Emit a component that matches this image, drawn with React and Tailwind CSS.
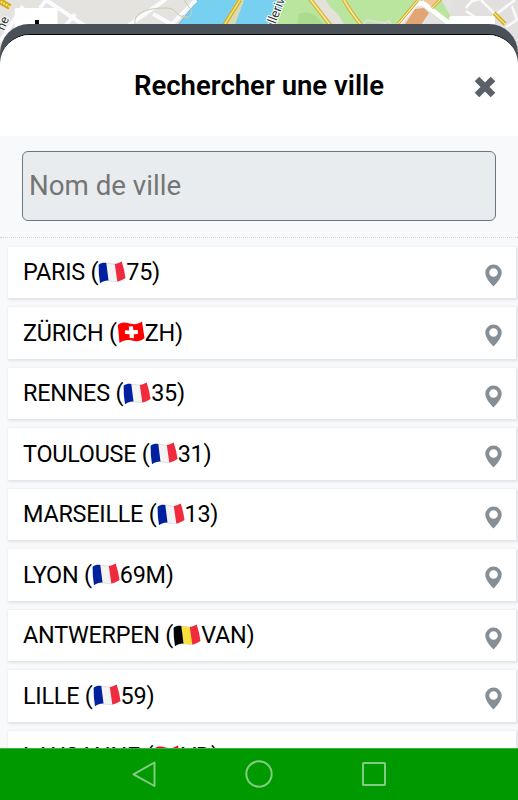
const CITIES = [
  { name: 'PARIS', country: 'fr', code: '75' },
  { name: 'ZÜRICH', country: 'ch', code: 'ZH' },
  { name: 'RENNES', country: 'fr', code: '35' },
  { name: 'TOULOUSE', country: 'fr', code: '31' },
  { name: 'MARSEILLE', country: 'fr', code: '13' },
  { name: 'LYON', country: 'fr', code: '69M' },
  { name: 'ANTWERPEN', country: 'be', code: 'VAN' },
  { name: 'LILLE', country: 'fr', code: '59' },
  { name: 'LAUSANNE', country: 'ch', code: 'VD' },
]

const BANDS = {
  fr: ['#00209f', '#f4f4f4', '#ef2b3d'],
  be: ['#050505', '#fbdf3c', '#ef2b3d'],
}

function Flag({ country }) {
  if (country === 'ch') {
    return (
      <svg className="inline-block h-[23px] w-[28px] shrink-0" viewBox="0 0 28 23">
        <path d="M.8 4C6-.5 10 2 14 2.800 18 3.700 21 3 25 .6L27.500 17C23 21 19 20.500 15 19.500 10 18.500 7 19 2.500 22Z" fill="#f00" />
        <path d="M11.800 5.500l4.200-.2.300 3.700 4.400.1.300 4-4.300.1.200 4-4.200-.1-.200-3.900-4.500-.1-.100-3.800 4.200.1z" fill="#fff" />
      </svg>
    )
  }
  const [left, middle, right] = BANDS[country]
  return (
    <svg className="inline-block h-[23px] w-[28px] shrink-0" viewBox="0 0 28 23">
      <path d="M8 2.200C12 1.500 15 4 20 2.600L22 19.500C17 22 13 19 9 20Z" fill={middle} />
      <path d="M8.500 2.300C12 2 15 4 20 2.800M10 20C14 19.500 17 22 22 19.500" fill="none" stroke="#c9cccf" strokeWidth=".6" />
      <path d="M.6 3.800C3 2 5.500 1.500 8.300 2L10.500 19.600C7 19.500 5 20.500 2 22.300Q.4 13 .6 3.800Z" fill={left} />
      <path d="M16.800 3.100C19.500 2.800 21.500 1.500 23.700.5Q26.500 9 27.500 17C24.500 18.500 22.500 20.300 19.300 20.600Z" fill={right} />
    </svg>
  )
}

function Pin() {
  return (
    <svg className="h-[23px] w-[17px]" viewBox="0 0 17 23">
      <path fillRule="evenodd" d="M8.500.5A8.200 8.200 0 0 0 .3 8.700C.3 12.500 4 18 8.500 22.500 13 18 16.700 12.500 16.700 8.700A8.200 8.200 0 0 0 8.500.5ZM8.500 4.200a4.300 4.300 0 1 1 0 8.600 4.300 4.300 0 0 1 0-8.600Z" fill="#868e96" />
    </svg>
  )
}

function MapBackdrop() {
  return (
    <svg className="absolute left-0 top-0 h-[60px] w-[518px]" viewBox="0 0 518 60">
      <rect width="518" height="60" fill="#e4e3df" />
      <path d="M198 0H291L271 30H174Z" fill="#78d0f1" />
      <path d="M198 0L174 30M291 0L271 30" stroke="#75aef0" strokeWidth="1" />
      <path d="M237 0H244L233 30H220Z" fill="#d9d9b5" />
      <path d="M240 0L223 27" stroke="#d2ad12" strokeWidth="4" />
      <path d="M240 0L223 27" stroke="#f3df86" strokeWidth="1.500" />
      <path d="M286 0H423L397 30H271Z" fill="#bae59e" />
      <path d="M299 14Q310 8 322 22L326 30H296Z" fill="#abdc8d" />
      <path d="M309 0H326Q330 8 338 14L344 24H332L311 3" fill="#e3e1d9" />
      <path d="M310-1L331 26M343-2Q349 10 362 26" stroke="#d2b42d" strokeWidth="4" fill="none" />
      <path d="M310-1L331 26M343-2Q349 10 362 26" stroke="#f5e69b" strokeWidth="1.800" fill="none" />
      <path d="M363 24L367 20 385 23 389 21 392 26" stroke="#ddd" strokeWidth="2" fill="none" />
      <path d="M435 0L424 11 447 25H456L441 0Z" fill="#bae59e" />
      <path d="M424 0L440 0 432 9 424 5Z" fill="#f0c89c" />
      <path d="M396 29L417 3 424 4 451 25" stroke="#fff" strokeWidth="5" fill="none" strokeLinejoin="round" />
      <path d="M398 28L416 7 424 7 448 27Z" fill="#e4e3e2" />
      <path d="M403 27L415 9 424 8 429 13 421 25H403Z" fill="#e4a575" />
      <path d="M398 24L418 0M432 8L442-2" stroke="#d2a91e" strokeWidth="3" />
      <path d="M398 24L418 0M432 8L442-2" stroke="#f5e69b" strokeWidth="1.200" />
      <path d="M453 0H518V60H443Z" fill="#e2e0df" />
      <path d="M466 8L472 1 480-1M481 0L494 13 491 24M491 18L515 0M512 6L517 20 506 27M466 11L475 17" stroke="#fafafc" strokeWidth="2.500" fill="none" />
      <path d="M494 13L505 24" stroke="#d2ad12" strokeWidth="4" />
      <path d="M494 13L505 24" stroke="#f5e69b" strokeWidth="1.200" />
      <path d="M0 42L23 6M40 8L46 0 85 26M75 14L63 29M128 26L166-1M153 14L171 24M171 25L196 0" stroke="#fafaff" strokeWidth="4" fill="none" />
      <path d="M135 24C133 10 154 8 166 8S174 16 187 18M184 0L192 11Q191 21 182 15" stroke="#bed0ad" strokeWidth="1" fill="none" />
      <path d="M-2 0L10 7" stroke="#d2ad12" strokeWidth="6" />
      <path d="M-2 0L10 7" stroke="#f5e69b" strokeWidth="2" strokeDasharray="2 1" />
      <text transform="translate(4 31) rotate(-67)" fontFamily="Roboto, sans-serif" fontSize="12.500" fill="#333" stroke="#fff" strokeWidth="2" paintOrder="stroke">ne</text>
      <text transform="translate(273 31) rotate(-69)" fontFamily="Roboto, sans-serif" fontSize="13" fill="#333" stroke="#fff" strokeWidth="2" paintOrder="stroke">elleriv</text>
      <rect x="14.500" y="8" width="43" height="44" rx="2" fill="#fff" />
      <path d="M37 20V35" stroke="#000" strokeWidth="4" />
      <rect x="449" y="16" width="46" height="30" rx="3" fill="#fff" />
    </svg>
  )
}

function CityRow({ city }) {
  return (
    <li className="flex h-[51.500px] shrink-0 items-center justify-between bg-white pl-[15px] pr-[14.500px] shadow-[1px_1px_2px_1px_#e1e4e8]">
      <span className="flex items-center whitespace-pre text-[23.400px] font-[380] leading-7 tracking-[-0.240px] text-black">
        <span>{city.name} (</span>
        <Flag country={city.country} />
        <span>{city.code})</span>
      </span>
      <span className="pt-[6px]"><Pin /></span>
    </li>
  )
}

function NavBar() {
  return (
    <nav className="relative h-[52px] shrink-0 border-t border-[#45b145] bg-[#009900]">
      <svg className="h-[51px] w-full" viewBox="0 0 518 51" fill="none" stroke="#80cc80" strokeWidth="2" strokeLinejoin="round">
        <path d="M154.500 13.500V37L133.500 25.300Z" />
        <circle cx="259" cy="25" r="12.700" />
        <rect x="363" y="14" width="22" height="22" rx=".5" />
      </svg>
    </nav>
  )
}

function App() {
  return (
    <div className="relative flex h-[800px] w-[518px] flex-col overflow-hidden font-[Roboto,sans-serif]">
      <MapBackdrop />
      <main className="relative mt-6 flex min-h-0 flex-1 flex-col overflow-hidden rounded-t-[29px] bg-[#495057] pt-[10px]">
        <div className="flex min-h-0 flex-1 flex-col overflow-hidden rounded-t-[30px] border-t border-black bg-[#f8f9fa]">
          <header className="relative flex h-[101px] shrink-0 items-center justify-center bg-white">
            <h1 className="text-[27.500px] font-semibold leading-8">Rechercher une ville</h1>
            <button className="absolute right-[22px] top-[41px]" aria-label="Fermer">
              <svg className="h-[22px] w-[22px]" viewBox="0 0 22 22">
                <path d="M3 3L19 19M19 3L3 19" stroke="#5b6168" strokeWidth="6.500" />
              </svg>
            </button>
          </header>
          <div className="h-[102px] shrink-0 border-b border-dotted border-[#ced4da] px-[22px] pt-[15px]">
            <input
              className="h-[70px] w-full rounded-md border border-[#6c7682] bg-[#e9ecef] px-[6px] pb-[1px] text-[27.700px] font-[390] placeholder:text-[#757575]"
              placeholder="Nom de ville"
            />
          </div>
          <ul className="flex min-h-0 flex-1 flex-col gap-[9px] overflow-hidden pl-[8px] pr-[2px] pt-[8.500px]">
            {CITIES.map(city => <CityRow key={city.name} city={city} />)}
          </ul>
        </div>
      </main>
      <NavBar />
    </div>
  )
}

export default App
